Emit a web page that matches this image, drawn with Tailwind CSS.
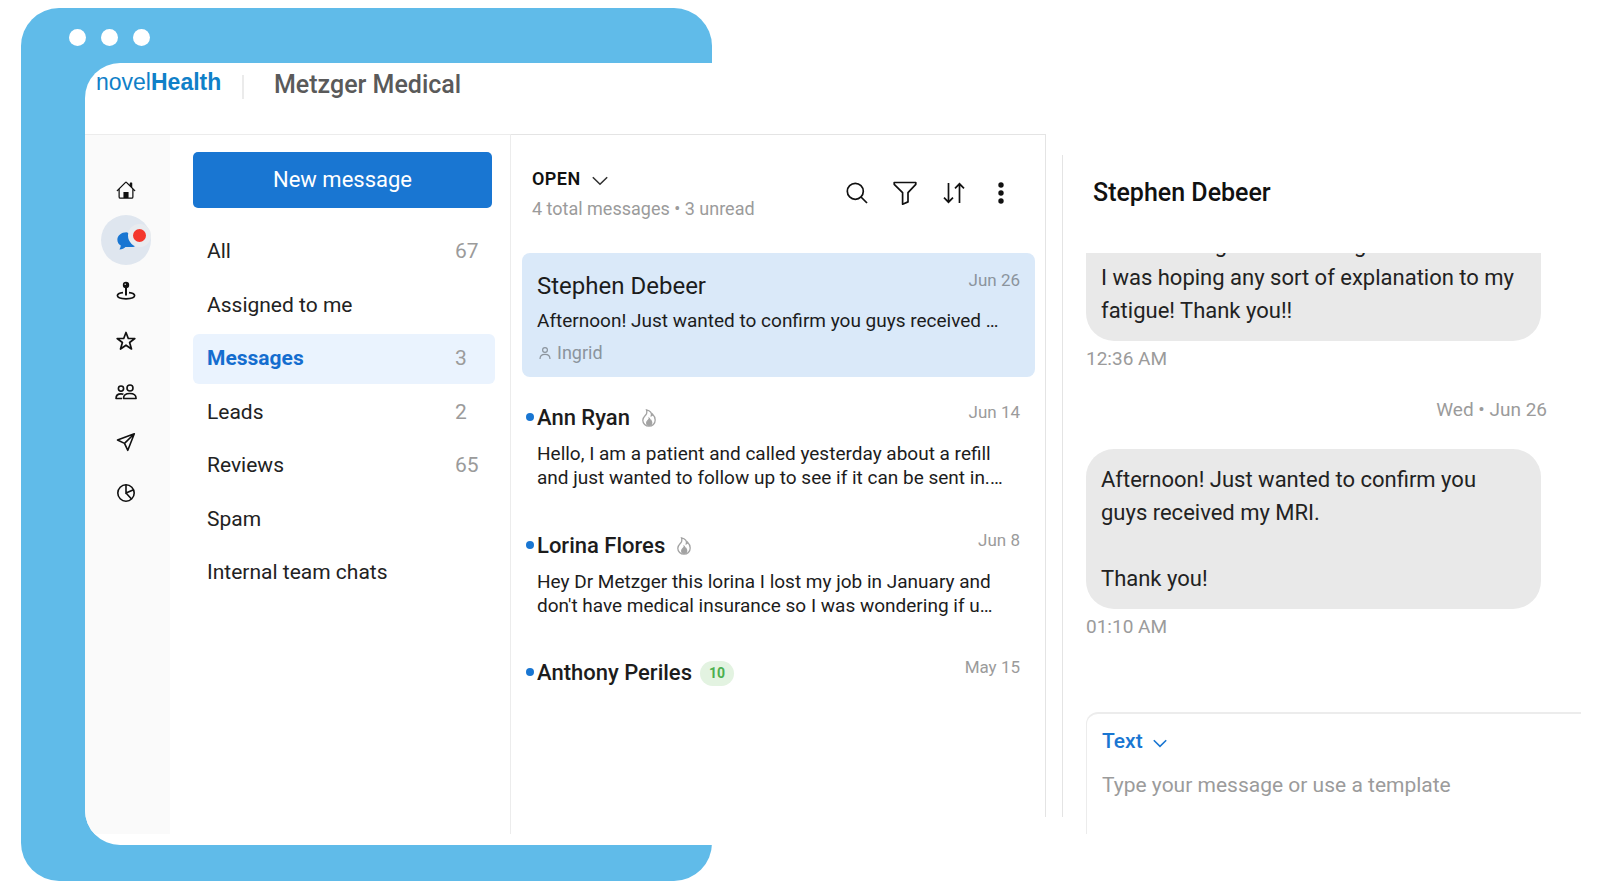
<!DOCTYPE html>
<html lang="en">
<head>
    <meta charset="UTF-8">
    <meta name="viewport" content="width=device-width, initial-scale=1.0">
    <title>novelHealth - Messages</title>
    <script src="https://cdn.jsdelivr.net/npm/@tailwindcss/browser@4"></script>
</head>
<body class="bg-white font-['Roboto',sans-serif] text-[#1c1c1c]">
    <div class="relative flex min-h-screen flex-col py-2 pl-[21px] pr-5">
        <!-- Blue window frame -->
        <div class="absolute inset-y-2 left-[21px] w-[691px] rounded-[38px] bg-[#60bbe9]"></div>
        <div class="absolute right-0 left-[85px] top-[63px] bottom-11 rounded-l-[35px] bg-white"></div>
        <div class="relative flex h-[55px] items-center gap-[15px] pl-12 pt-1">
            <span class="size-[17px] rounded-full bg-white"></span>
            <span class="size-[17px] rounded-full bg-white"></span>
            <span class="size-[17px] rounded-full bg-white"></span>
        </div>

        <div class="relative mb-9 ml-16 flex flex-1 flex-col overflow-hidden rounded-l-[35px] pb-[11px]">
            <!-- Top bar -->
            <header class="flex h-[71px] items-start pl-[11px]">
                <a href="#" class="mt-[5px] w-[146px] font-['Liberation_Sans',sans-serif] text-[23px] leading-7 text-[#1080c8]">novel<b>Health</b></a>
                <span class="mt-3 h-6 w-[2px] bg-[#ebebeb]"></span>
                <h1 class="ml-[30px] mt-1 text-[25px] font-medium leading-9 text-[#5a5a5a]">Metzger Medical</h1>
            </header>

            <div class="flex flex-1">
                <!-- Icon rail -->
                <nav class="flex w-[85px] flex-col items-center border-t border-[#ececec] bg-[#fafafa] pt-[30px] pr-[3px] text-[#111]">
                    <a href="#" aria-label="Home" class="flex size-[50px] items-center justify-center">
                        <svg class="size-5" viewBox="0 0 16 16" fill="currentColor"><path d="M8.707 1.5a1 1 0 0 0-1.414 0L.646 8.146a.5.5 0 0 0 .708.708L2 8.207V13.5A1.5 1.5 0 0 0 3.5 15h9a1.500 1.500 0 0 0 1.500-1.500V8.207l.646.647a.5.5 0 0 0 .708-.708L13 5.793V2.500a.5.5 0 0 0-.5-.5h-1a.5.5 0 0 0-.5.5v1.293zM13 7.207V13.500a.5.5 0 0 1-.5.5H10V9.500H6V14H3.500a.5.5 0 0 1-.5-.5V7.207l5-5z"/><path d="M6.300 9.500h3.400V14H6.300z"/></svg>
                    </a>
                    <a href="#" aria-label="Messages, unread" class="relative flex size-[50px] items-center justify-center rounded-full bg-[#dfe6ef]">
                        <svg class="size-[19px]" viewBox="0 0 16 16" fill="#1976d2"><path d="M8 1C3.700 1 .3 3.700.3 7.300c0 2.200 1.100 3.900 2.900 5-.1 1.200-.5 2.300-1.100 3.300 2.200-.2 3.900-1 5-2.100h6.600c.8 0 1.200-.4 1.500-1V4z"/></svg>
                        <span class="absolute top-[9px] right-0 size-[23px] rounded-full border-[5px] border-[#e8ebef] bg-[#f4372c]"></span>
                    </a>
                    <a href="#" aria-label="Locations" class="flex size-[51px] items-center justify-center">
                        <svg class="size-5" viewBox="0 0 20 20" fill="none" stroke="currentColor" stroke-width="1.700"><circle cx="10" cy="4" r="3.200" fill="currentColor" stroke="none"/><path d="M10 7v7.500" stroke-width="2"/><path d="M7 11.700c-3.300.4-5.600 1.400-5.600 2.900 0 1.900 3.600 3.200 8.600 3.200s8.600-1.300 8.600-3.200c0-1.500-2.300-2.500-5.600-2.900"/><circle cx="9.200" cy="3.200" r=".7" fill="#fff" stroke="none"/></svg>
                    </a>
                    <a href="#" aria-label="Reviews" class="flex size-[50px] items-center justify-center">
                        <svg class="size-5" viewBox="0 0 20 20" fill="none" stroke="currentColor" stroke-width="1.700" stroke-linejoin="round"><path d="M10 1.500l2.300 6h6.500l-5.200 4 1.900 6.500-5.500-3.800L4.500 18l1.900-6.500-5.200-4h6.500z"/></svg>
                    </a>
                    <a href="#" aria-label="Contacts" class="flex size-[51px] items-center justify-center">
                        <svg class="h-4 w-[22px]" viewBox="0 0 22 16" fill="none" stroke="currentColor" stroke-width="1.600" stroke-linejoin="round"><circle cx="6" cy="4.600" r="2.600"/><circle cx="15" cy="4" r="3"/><path d="M8.500 14.500c0-3 2.500-5 6.300-5s6.300 2 6.300 5z"/><path d="M7 14.500H1c0-2.800 1.800-4.600 5-4.600.9 0 1.700.1 2.400.4"/></svg>
                    </a>
                    <a href="#" aria-label="Campaigns" class="flex size-[50px] items-center justify-center">
                        <svg class="size-5" viewBox="0 0 20 20" fill="none" stroke="currentColor" stroke-width="1.600" stroke-linejoin="round"><path d="M18.300 1.700L1.500 8l7 3.400 3.300 6.900zM8.500 11.400l9.800-9.700"/></svg>
                    </a>
                    <a href="#" aria-label="Analytics" class="flex size-[51px] items-center justify-center">
                        <svg class="size-5" viewBox="0 0 20 20" fill="none" stroke="currentColor" stroke-width="1.600"><circle cx="10" cy="10" r="8.200"/><path d="M10 1.800V10l7.600-3.200M10 10l5.500 6"/></svg>
                    </a>
                </nav>

                <!-- Folders -->
                <section class="w-[341px] border-t border-r border-[#ececec] px-[15px] pt-[17px] pl-[23px]">
                    <button class="h-14 w-[299px] rounded-[5px] bg-[#1976d2] pb-[2px] text-[22px] text-white">New message</button>
                    <ul class="mt-[19px] flex h-[371px] flex-col justify-between text-[21px] text-[#222]">
                        <li><a href="#" class="flex h-[50px] items-center rounded-md pl-[14px]"><span class="flex-1">All</span><span class="w-10 text-[#9b9b9b]">67</span></a></li>
                        <li><a href="#" class="flex h-[50px] items-center rounded-md pl-[14px]">Assigned to me</a></li>
                        <li><a href="#" class="flex h-[50px] items-center rounded-md bg-[#eaf3fe] pl-[14px]"><b class="flex-1 text-[#146dcf]">Messages</b><span class="w-10 text-[#9b9b9b]">3</span></a></li>
                        <li><a href="#" class="flex h-[50px] items-center rounded-md pl-[14px]"><span class="flex-1">Leads</span><span class="w-10 text-[#9b9b9b]">2</span></a></li>
                        <li><a href="#" class="flex h-[50px] items-center rounded-md pl-[14px]"><span class="flex-1">Reviews</span><span class="w-10 text-[#9b9b9b]">65</span></a></li>
                        <li><a href="#" class="flex h-[50px] items-center rounded-md pl-[14px]">Spam</a></li>
                        <li><a href="#" class="flex h-[50px] items-center rounded-md pl-[14px]">Internal team chats</a></li>
                    </ul>
                </section>

                <!-- Conversation list -->
                <section class="mb-[17px] w-[535px] shrink-0 border-t border-r border-[#e4e4e4] pr-[10px] pl-[11px]">
                    <div class="flex h-[118px] items-start justify-between pr-5 pl-[10px] pt-8">
                        <div>
                            <button class="flex items-center gap-[11px] text-lg font-semibold leading-6 tracking-wide text-[#111]">OPEN
                                <svg class="mt-1 h-[10px] w-4" viewBox="0 0 16 10" fill="none" stroke="#333" stroke-width="1.600"><path d="M.8 1.200L8 8.200l7.200-7"/></svg>
                            </button>
                            <p class="mt-[6px] text-[18px] leading-6 text-[#9b9b9b]">4 total messages • 3 unread</p>
                        </div>
                        <div class="mt-[14px] flex items-center text-[#111]">
                            <button aria-label="Search" class="w-[47px]"><svg class="size-[22px]" viewBox="0 0 22 22" fill="none" stroke="currentColor" stroke-width="1.700"><circle cx="9.300" cy="9.300" r="8"/><path d="M15 15l6 6"/></svg></button>
                            <button aria-label="Filter" class="w-[50px]"><svg class="size-6" viewBox="0 0 24 24" fill="none" stroke="currentColor" stroke-width="1.700" stroke-linejoin="round"><path d="M1.200 1.500h21.600v1.800L15 11.700v9.200l-5.400 2.300V11.700L1.200 3.300z"/></svg></button>
                            <button aria-label="Sort" class="w-[55px]"><svg class="size-[22px]" viewBox="0 0 22 22" fill="none" stroke="currentColor" stroke-width="1.700"><path d="M5.500 1v19M1 15.700l4.500 4.500 4.500-4.500M16.500 21V2M12 6.300l4.500-4.500L21 6.300"/></svg></button>
                            <button aria-label="More" class="w-[17px]"><svg class="h-[22px] w-[6px]" viewBox="0 0 6 22" fill="currentColor"><circle cx="3" cy="3" r="2.700"/><circle cx="3" cy="11" r="2.700"/><circle cx="3" cy="19" r="2.700"/></svg></button>
                        </div>
                    </div>

                    <article class="h-[124px] rounded-lg bg-[#dae9f9] px-[15px] pt-4">
                        <div class="flex justify-between">
                            <h2 class="text-[24px] leading-[34px]">Stephen Debeer</h2>
                            <time class="text-[17px] leading-[22px] text-[#8b949d]">Jun 26</time>
                        </div>
                        <p class="mt-[6px] text-[19px] leading-6 whitespace-nowrap">Afternoon! Just wanted to confirm you guys received …</p>
                        <p class="mt-2 flex items-center gap-[6px] pl-[2px] text-[18px] leading-6 text-[#8b949d]">
                            <svg class="size-3" viewBox="0 0 12 12" fill="none" stroke="currentColor" stroke-width="1.200"><circle cx="6" cy="3" r="2.400"/><path d="M1 12c0-3 1.700-4.600 5-4.600s5 1.600 5 4.600"/></svg>
                            Ingrid
                        </p>
                    </article>

                    <article class="relative mt-5 h-[108px] px-[15px] pt-1">
                        <span class="absolute top-4 left-1 size-2 rounded-full bg-[#1976d2]"></span>
                        <div class="flex justify-between">
                            <h2 class="flex items-center gap-3 text-[22px] font-medium leading-[34px]">Ann Ryan
                                <svg class="h-[18px] w-[14px]" viewBox="0 0 14 18" fill="none" stroke="#a3a3a3" stroke-width="1.300"><path d="M4.500.8c4 .8 5.500 3.500 4.800 6 .8-.2 1.200-.8 1.300-1.600C12.500 7 13.200 9 13.200 11c0 3.600-2.700 6.200-6.200 6.200S.8 14.600.8 11.200c0-2.500 1.600-3.700 2.900-5.200C5 4.500 5 2.500 4.500.8z"/><path d="M7.300 9.500c.2 1.500-2.600 2.200-2.600 4.200a2.500 2.500 0 0 0 5 .2c0-.9-.3-1.400-.6-2-.2.6-.5.800-.9 1 .2-1.500.1-2.500-.9-3.400z" fill="#a3a3a3"/></svg>
                            </h2>
                            <time class="text-[17px] leading-[22px] text-[#9b9b9b]">Jun 14</time>
                        </div>
                        <p class="mt-[7px] text-[19px] leading-6 whitespace-nowrap">Hello, I am a patient and called yesterday about a refill<br>and just wanted to follow up to see if it can be sent in.…</p>
                    </article>

                    <article class="relative mt-5 h-[108px] px-[15px] pt-1">
                        <span class="absolute top-4 left-1 size-2 rounded-full bg-[#1976d2]"></span>
                        <div class="flex justify-between">
                            <h2 class="flex items-center gap-3 text-[22px] font-medium leading-[34px]">Lorina Flores
                                <svg class="h-[18px] w-[14px]" viewBox="0 0 14 18" fill="none" stroke="#a3a3a3" stroke-width="1.300"><path d="M4.500.8c4 .8 5.500 3.500 4.800 6 .8-.2 1.200-.8 1.300-1.600C12.500 7 13.200 9 13.200 11c0 3.600-2.700 6.200-6.200 6.200S.8 14.600.8 11.200c0-2.500 1.600-3.700 2.900-5.200C5 4.500 5 2.500 4.500.8z"/><path d="M7.300 9.500c.2 1.500-2.600 2.200-2.600 4.200a2.500 2.500 0 0 0 5 .2c0-.9-.3-1.400-.6-2-.2.6-.5.800-.9 1 .2-1.500.1-2.500-.9-3.400z" fill="#a3a3a3"/></svg>
                            </h2>
                            <time class="text-[17px] leading-[22px] text-[#9b9b9b]">Jun 8</time>
                        </div>
                        <p class="mt-[7px] text-[19px] leading-6 whitespace-nowrap">Hey Dr Metzger this lorina I lost my job in January and<br>don't have medical insurance so I was wondering if u…</p>
                    </article>

                    <article class="relative mt-[19px] px-[15px] pt-1">
                        <span class="absolute top-4 left-1 size-2 rounded-full bg-[#1976d2]"></span>
                        <div class="flex justify-between">
                            <h2 class="flex items-center gap-2 text-[22px] font-medium leading-[34px]">Anthony Periles
                                <span class="rounded-full bg-[#e3f3e1] px-[9px] text-[14px] font-bold leading-[25px] text-[#4caf50]">10</span>
                            </h2>
                            <time class="text-[17px] leading-[22px] text-[#9b9b9b]">May 15</time>
                        </div>
                    </article>
                </section>

                <!-- Conversation -->
                <section class="relative ml-4 flex flex-1 flex-col pl-6">
                    <span class="absolute top-[21px] bottom-[17px] left-0 w-px bg-[#e4e4e4]"></span>
                    <h2 class="h-[119px] pt-[41px] pl-[7px] text-[25px] font-medium leading-9 text-[#111]">Stephen Debeer</h2>

                    <div class="flex-1 pr-10 text-[19px] leading-6 text-[#9b9b9b]">
                        <div class="flex h-[88px] flex-col justify-end overflow-hidden">
                            <p class="rounded-[28px] bg-[#e9e9e9] px-[15px] py-[14px] text-[22px] leading-[33px] whitespace-nowrap text-[#222]">about seeing results during<br>I was hoping any sort of explanation to my<br>fatigue! Thank you!!</p>
                        </div>
                        <time class="mt-[6px] block">12:36 AM</time>
                        <p class="-mr-[6px] mt-[27px] text-right">Wed • Jun 26</p>
                        <p class="mt-[27px] rounded-[28px] bg-[#e9e9e9] px-[15px] py-[14px] text-[22px] leading-[33px] text-[#222]">Afternoon! Just wanted to confirm you<br>guys received my MRI.<br><br>Thank you!</p>
                        <time class="mt-[6px] block">01:10 AM</time>
                    </div>

                    <form class="h-[122px] rounded-tl-[12px] border-t-2 border-l border-[#ececec] px-[15px] pt-[15px]">
                        <button type="button" class="flex items-center gap-[10px] text-[21px] font-medium leading-6 text-[#1976d2]">Text
                            <svg class="mt-1 h-[9px] w-[14px]" viewBox="0 0 14 9" fill="none" stroke="currentColor" stroke-width="1.600"><path d="M.8 1.200L7 7.300l6.200-6.100"/></svg>
                        </button>
                        <textarea aria-label="Message" placeholder="Type your message or use a template" class="mt-[18px] block h-12 w-full resize-none text-[21px] leading-7 outline-none placeholder:text-[#9b9b9b]"></textarea>
                    </form>
                </section>
            </div>
        </div>
    </div>
</body>
</html>
